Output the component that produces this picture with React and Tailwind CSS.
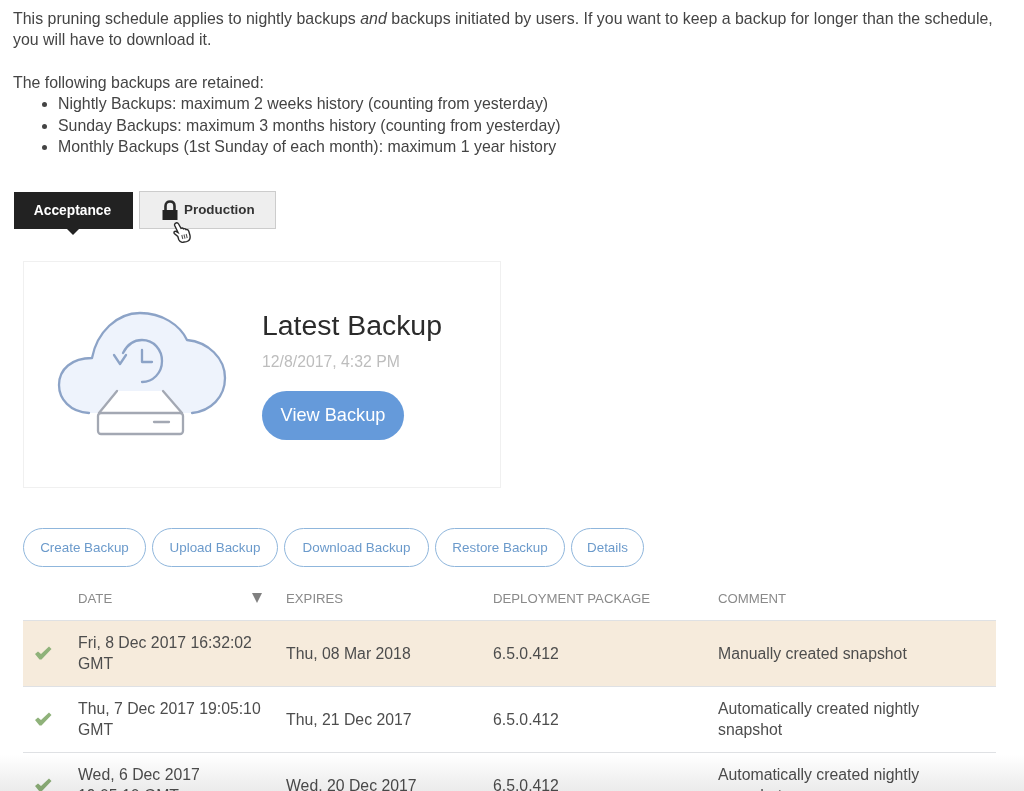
// App.jsx — backup overview page
const retained = [
  'Nightly Backups: maximum 2 weeks history (counting from yesterday)',
  'Sunday Backups: maximum 3 months history (counting from yesterday)',
  'Monthly Backups (1st Sunday of each month): maximum 1 year history',
]

const actions = [
  { label: 'Create Backup', w: 'w-[123px]' },
  { label: 'Upload Backup', w: 'w-[126px]' },
  { label: 'Download Backup', w: 'w-[145px]' },
  { label: 'Restore Backup', w: 'w-[130px]' },
  { label: 'Details', w: 'w-[73px]' },
]

const rows = [
  {
    date: 'Fri, 8 Dec 2017 16:32:02 GMT',
    expires: 'Thu, 08 Mar 2018',
    pkg: '6.5.0.412',
    comment: 'Manually created snapshot',
    highlight: true,
  },
  {
    date: 'Thu, 7 Dec 2017 19:05:10 GMT',
    expires: 'Thu, 21 Dec 2017',
    pkg: '6.5.0.412',
    comment: 'Automatically created nightly snapshot',
  },
  {
    date: 'Wed, 6 Dec 2017 19:05:10 GMT',
    expires: 'Wed, 20 Dec 2017',
    pkg: '6.5.0.412',
    comment: 'Automatically created nightly snapshot',
  },
]

// viewBox uses page coordinates, handy for comparing with the screenshot
function CloudIcon() {
  return (
    <svg width="200" height="155" viewBox="40 295 200 155" fill="none" strokeLinecap="round" strokeLinejoin="round" className="shrink-0">
      <path
        d="M89 413 C70 412 59 399 59 385 C59 369 72 358 92 358 C97 332 117 313 140 313 C162 313 180 325 187 340 C208 342 225 358 225 378 C225 397 211 411 192 413 L183 413 L163 391 L117 391 L98 413 Z"
        fill="#eef3fc"
      />
      <path
        d="M89 413 C70 412 59 399 59 385 C59 369 72 358 92 358 C97 332 117 313 140 313 C162 313 180 325 187 340 C208 342 225 358 225 378 C225 397 211 411 192 413"
        stroke="#8ca3c7"
        strokeWidth="2.3"
      />
      {/* jam */}
      <path d="M123 353 C127 345 134 340 142 340 C154 340 162 350 162 361 C162 373 153 382 142 382" stroke="#8ca3c7" strokeWidth="2.3" />
      <path d="M114 355 L120 364 L126 355" stroke="#8ca3c7" strokeWidth="2.3" />
      <path d="M142 350 L142 362 L152 362" stroke="#8ca3c7" strokeWidth="2.3" />
      {/* disk */}
      <path d="M117 391 L99 413 M163 391 L182 413" stroke="#a3a8b3" strokeWidth="2.3" />
      <rect x="98" y="413" width="85" height="21" rx="3" fill="#fff" stroke="#a3a8b3" strokeWidth="2.3" />
      <path d="M154 422 L169 422" stroke="#a3a8b3" strokeWidth="2.3" />
    </svg>
  )
}

function LockIcon() {
  return (
    <svg width="16" height="22" viewBox="0 0 16 22">
      <path d="M3.5 11 V7 C3.5 4 5.5 2.5 8 2.5 C10.5 2.5 12.5 4 12.5 7 V11" fill="none" stroke="#2a2a2a" strokeWidth="2.6" />
      <rect x="0.5" y="11" width="15" height="10" fill="#222" />
    </svg>
  )
}

function HandCursor() {
  return (
    <svg width="18" height="21" viewBox="0 0 18 21">
      <path
        d="M3 1 C4 0.6 5 1 5.6 2 L8 6.3 C9 5.8 10 6 10.5 6.8 C11.5 6.4 12.5 6.8 13 7.6 C14.2 7.3 15.3 8 15.7 9 L17 13.5 C17.5 16.5 16 19 13.5 19.6 L10 20.3 C8 20.5 6.5 19.3 5.8 17.8 L4.8 14.5 L1.3 11.5 C0.5 10.3 1.5 8.8 3 9.3 L5 10.5 L1.7 3.5 C1.3 2.4 1.9 1.4 3 1 Z"
        fill="#fff"
        stroke="#2a2a2a"
        strokeWidth="1.4"
      />
      <path d="M8.8 13 L9.8 17 M11 12.5 L12 16.7 M13.2 12 L14.2 16.2" stroke="#555" strokeWidth="1.1" />
    </svg>
  )
}

function Check() {
  return (
    <svg width="18" height="15" viewBox="0 0 18 15">
      <path d="M1 8 L4 5.5 L7 8 L15 0.5 L17.5 3 L7.5 13.5 L5.5 13.5 Z" fill="#8fb27a" />
    </svg>
  )
}

function Row({ row }) {
  return (
    <div
      className={`grid grid-cols-[55px_208px_207px_225px_278px] items-center h-[66px] pb-[1px] border-b border-[#dfe1e4] text-[15.8px] leading-[21px] text-[#4d4d4d] ${
        row.highlight ? 'bg-[#f6ebdc]' : ''
      }`}
    >
      <div className="pl-[11px]"><Check /></div>
      <div className="pr-[23px]">{row.date}</div>
      <div>{row.expires}</div>
      <div>{row.pkg}</div>
      <div className="pr-8">{row.comment}</div>
    </div>
  )
}

export default function App() {
  return (
    <div className="relative h-[791px] overflow-hidden bg-white font-['Liberation_Sans',Arial,sans-serif] text-[#444]">
      <div className="pl-[13px] pr-[28px] pt-[8px] text-[15.9px] leading-[21.4px]">
        <p className="tracking-[0.02px]">
          This pruning schedule applies to nightly backups <em>and</em> backups initiated by users. If you want to keep a
          backup for longer than the schedule, you will have to download it.
        </p>
        <p className="mt-[21px]">The following backups are retained:</p>
        <ul className="list-disc pl-[45px]">
          {retained.map((item) => (
            <li key={item}>{item}</li>
          ))}
        </ul>
      </div>

      {/* tabs */}
      <div className="flex items-start gap-[6px] pl-[14px] mt-[34px] h-[39px] font-bold">
        <div className="relative mt-[1px] flex h-[37px] w-[119px] items-center justify-center bg-[#222] pr-[2px] text-[13.8px] text-white">
          Acceptance
          <div className="absolute left-[53px] top-[37px] h-0 w-0 border-x-[6px] border-t-[6px] border-x-transparent border-t-[#222]" />
        </div>
        <div className="relative flex h-[38px] w-[137px] items-center gap-[6px] border border-[#ccc] bg-[#eee] pl-[22px] text-[13.4px] text-[#333]">
          <LockIcon />
          Production
          <div className="absolute left-[33px] top-[30px]"><HandCursor /></div>
        </div>
      </div>

      {/* latest backup card */}
      <div className="ml-[23px] mt-[31px] flex h-[227px] w-[478px] items-center border border-[#f0f0f0]">
        <div className="ml-[16px] mb-[4px]"><CloudIcon /></div>
        <div className="ml-[22px] mb-[1px]">
          <h2 className="text-[28.4px] leading-[32px] text-[#2b2b2b]">Latest Backup</h2>
          <p className="mt-[11px] text-[15.8px] leading-[20px] text-[#bdbdbd]">12/8/2017, 4:32 PM</p>
          <button className="mt-[19px] h-[49px] w-[142px] rounded-full bg-[#659ada] text-[18.2px] text-white">
            View Backup
          </button>
        </div>
      </div>

      {/* actions */}
      <div className="ml-[23px] mt-[40px] flex gap-[6px]">
        {actions.map((a) => (
          <button
            key={a.label}
            className={`${a.w} h-[39px] rounded-full border border-[#8fb6dc] text-[13.4px] text-[#6b9acb]`}
          >
            {a.label}
          </button>
        ))}
      </div>

      {/* table */}
      <div className="ml-[23px] mt-[10px] w-[973px]">
        <div className="grid grid-cols-[55px_208px_207px_225px_278px] items-center h-[44px] border-b border-[#dfe1e4] text-[13.2px] text-[#8a8a8a]">
          <div />
          <div className="relative">
            DATE
            <span className="absolute right-[24px] top-[4px] h-0 w-0 border-x-[5px] border-t-[10px] border-x-transparent border-t-[#808080]" />
          </div>
          <div>EXPIRES</div>
          <div>DEPLOYMENT PACKAGE</div>
          <div>COMMENT</div>
        </div>
        {rows.map((row) => (
          <Row key={row.date} row={row} />
        ))}
      </div>

      {/* fade of the video player */}
      <div className="pointer-events-none absolute inset-x-0 bottom-0 h-[36px] bg-gradient-to-b from-white to-[#ebebeb] mix-blend-multiply" />
    </div>
  )
}
